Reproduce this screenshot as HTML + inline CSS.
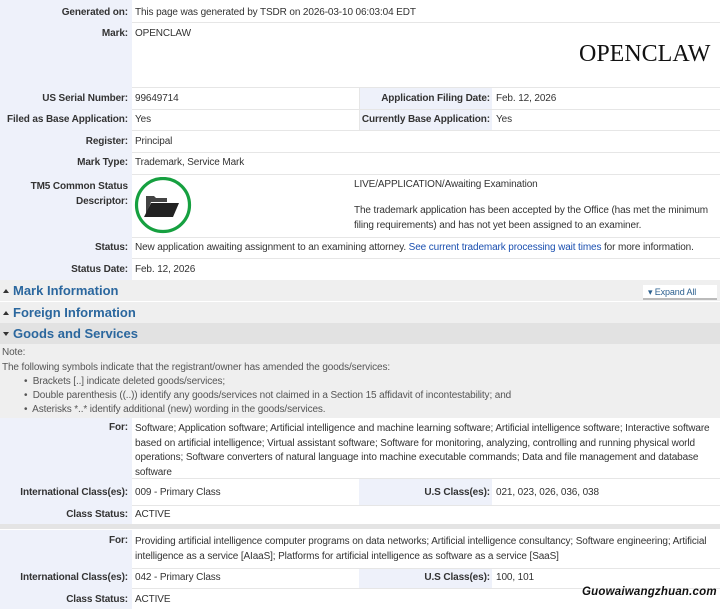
<!DOCTYPE html>
<html><head><meta charset="utf-8"><style>
*{margin:0;padding:0;box-sizing:border-box}
body{width:720px;height:609px;overflow:hidden;background:#fff;font-family:"Liberation Sans",Arial,sans-serif;font-size:10px;letter-spacing:-0.12px;color:#333;position:relative}
.a{position:absolute;white-space:nowrap}
.lb{position:absolute;left:0;width:132px;background:#eef1fa}
.lbl{position:absolute;right:592px;text-align:right;font-weight:bold;white-space:nowrap}
.v{position:absolute;left:135px;white-space:nowrap}
.hl{position:absolute;left:132px;right:0;height:1px;background:#e6e6e6}
.sec{position:absolute;left:0;width:720px;height:21px}
.sec span{position:absolute;left:13px;top:3px;font-size:13px;font-weight:bold;color:#2b679e;letter-spacing:0}
.sec i{position:absolute;left:3px;top:9px;width:0;height:0;border-left:3px solid transparent;border-right:3px solid transparent}
.up{border-bottom:4px solid #333}
.dn{border-top:4px solid #333}
.ng{color:#555}
</style></head><body>
<div class="lb" style="top:0;height:280px"></div>
<div class="lb" style="top:418px;height:106px"></div>
<div class="lb" style="top:530px;height:79px"></div>
<div class="a" style="left:359px;top:87px;width:133px;height:43px;background:#eef1fa"></div>
<div class="a" style="left:359px;top:478px;width:133px;height:27px;background:#eef1fa"></div>
<div class="a" style="left:359px;top:568px;width:133px;height:20px;background:#eef1fa"></div>

<div class="hl" style="top:22px"></div>
<div class="hl" style="top:87px"></div>
<div class="hl" style="top:109px"></div>
<div class="hl" style="top:130px"></div>
<div class="hl" style="top:152px"></div>
<div class="hl" style="top:174px"></div>
<div class="hl" style="top:237px"></div>
<div class="hl" style="top:258px"></div>
<div class="hl" style="top:478px"></div>
<div class="hl" style="top:505px"></div>
<div class="hl" style="top:568px"></div>
<div class="hl" style="top:588px"></div>
<div class="a" style="left:359px;top:87px;width:1px;height:43px;background:#e6e6e6"></div>

<div class="lbl" style="top:7px">Generated on:</div><div class="v" style="top:7px">This page was generated by TSDR on 2026-03-10 06:03:04 EDT</div>
<div class="lbl" style="top:28px">Mark:</div><div class="v" style="top:28px">OPENCLAW</div>
<div class="a" style="left:579px;top:41px;font-family:'Liberation Serif',serif;font-size:24px;letter-spacing:0;color:#111">OPENCLAW</div>
<div class="lbl" style="top:93px">US Serial Number:</div><div class="v" style="top:93px">99649714</div>
<div class="a" style="left:360px;width:130px;text-align:right;top:93px;font-weight:bold">Application Filing Date:</div><div class="a" style="left:496px;top:93px">Feb. 12, 2026</div>
<div class="lbl" style="top:114px">Filed as Base Application:</div><div class="v" style="top:114px">Yes</div>
<div class="a" style="left:360px;width:130px;text-align:right;top:114px;font-weight:bold">Currently Base Application:</div><div class="a" style="left:496px;top:114px">Yes</div>
<div class="lbl" style="top:136px">Register:</div><div class="v" style="top:136px">Principal</div>
<div class="lbl" style="top:157px">Mark Type:</div><div class="v" style="top:157px">Trademark, Service Mark</div>
<div class="lbl" style="top:179px;line-height:15px">TM5 Common Status<br>Descriptor:</div>
<svg class="a" style="left:134px;top:177px" width="58" height="58" viewBox="0 0 58 58">
<circle cx="29" cy="28" r="26.5" fill="#fff" stroke="#16a040" stroke-width="3.2"/>
<path d="M12 19h8l2 2h11v4H17l-5 13z" fill="#444"/>
<path d="M17 26h28l-6 14H10z" fill="#222"/>
</svg>
<div class="a" style="left:354px;top:179px">LIVE/APPLICATION/Awaiting Examination</div>
<div class="a" style="left:354px;top:203px;line-height:15px">The trademark application has been accepted by the Office (has met the minimum<br>filing requirements) and has not yet been assigned to an examiner.</div>
<div class="lbl" style="top:242px">Status:</div><div class="v" style="top:242px">New application awaiting assignment to an examining attorney. <span style="color:#1a4fb0">See current trademark processing wait times</span> for more information.</div>
<div class="lbl" style="top:264px">Status Date:</div><div class="v" style="top:264px">Feb. 12, 2026</div>

<div class="sec" style="top:280px;background:#efefef"><i class="up"></i><span>Mark Information</span></div>
<div class="a" style="left:643px;top:285px;width:74px;height:15px;background:#fff;border-bottom:2px solid #bbb;font-size:9px;color:#2b5f8e;padding:2px 0 0 5px">&#9662; Expand All</div>
<div class="sec" style="top:302px;background:#efefef"><i class="up"></i><span>Foreign Information</span></div>
<div class="sec" style="top:323px;background:#e2e2e2"><i class="dn"></i><span>Goods and Services</span></div>
<div class="a" style="left:0;top:344px;width:720px;height:74px;background:#efefef"></div>
<div class="a ng" style="left:2px;top:347px">Note:</div>
<div class="a ng" style="left:2px;top:362px">The following symbols indicate that the registrant/owner has amended the goods/services:</div>
<div class="a ng" style="left:24px;top:376px">&#8226;&nbsp; Brackets [..] indicate deleted goods/services;</div>
<div class="a ng" style="left:24px;top:390px">&#8226;&nbsp; Double parenthesis ((..)) identify any goods/services not claimed in a Section 15 affidavit of incontestability; and</div>
<div class="a ng" style="left:24px;top:404px">&#8226;&nbsp; Asterisks *..* identify additional (new) wording in the goods/services.</div>

<div class="lbl" style="top:422px">For:</div>
<div class="v" style="top:422px;line-height:14.5px">Software; Application software; Artificial intelligence and machine learning software; Artificial intelligence software; Interactive software<br>based on artificial intelligence; Virtual assistant software; Software for monitoring, analyzing, controlling and running physical world<br>operations; Software converters of natural language into machine executable commands; Data and file management and database<br>software</div>
<div class="lbl" style="top:487px">International Class(es):</div><div class="v" style="top:487px">009 - Primary Class</div>
<div class="a" style="left:360px;width:130px;text-align:right;top:487px;font-weight:bold">U.S Class(es):</div><div class="a" style="left:496px;top:487px">021, 023, 026, 036, 038</div>
<div class="lbl" style="top:509px">Class Status:</div><div class="v" style="top:509px">ACTIVE</div>
<div class="a" style="left:0;top:524px;width:720px;height:5px;background:#e4e4e4"></div>
<div class="lbl" style="top:535px">For:</div>
<div class="v" style="top:535px;line-height:14.5px">Providing artificial intelligence computer programs on data networks; Artificial intelligence consultancy; Software engineering; Artificial<br>intelligence as a service [AIaaS]; Platforms for artificial intelligence as software as a service [SaaS]</div>
<div class="lbl" style="top:572px">International Class(es):</div><div class="v" style="top:572px">042 - Primary Class</div>
<div class="a" style="left:360px;width:130px;text-align:right;top:572px;font-weight:bold">U.S Class(es):</div><div class="a" style="left:496px;top:572px">100, 101</div>
<div class="lbl" style="top:594px">Class Status:</div><div class="v" style="top:594px">ACTIVE</div>
<div class="a" style="left:582px;top:586px;font-size:11.5px;font-weight:bold;font-style:italic;color:#111;letter-spacing:0.2px;text-shadow:0 0 2px #fff,1px 1px 0 #fff">Guowaiwangzhuan.com</div>
</body></html>
